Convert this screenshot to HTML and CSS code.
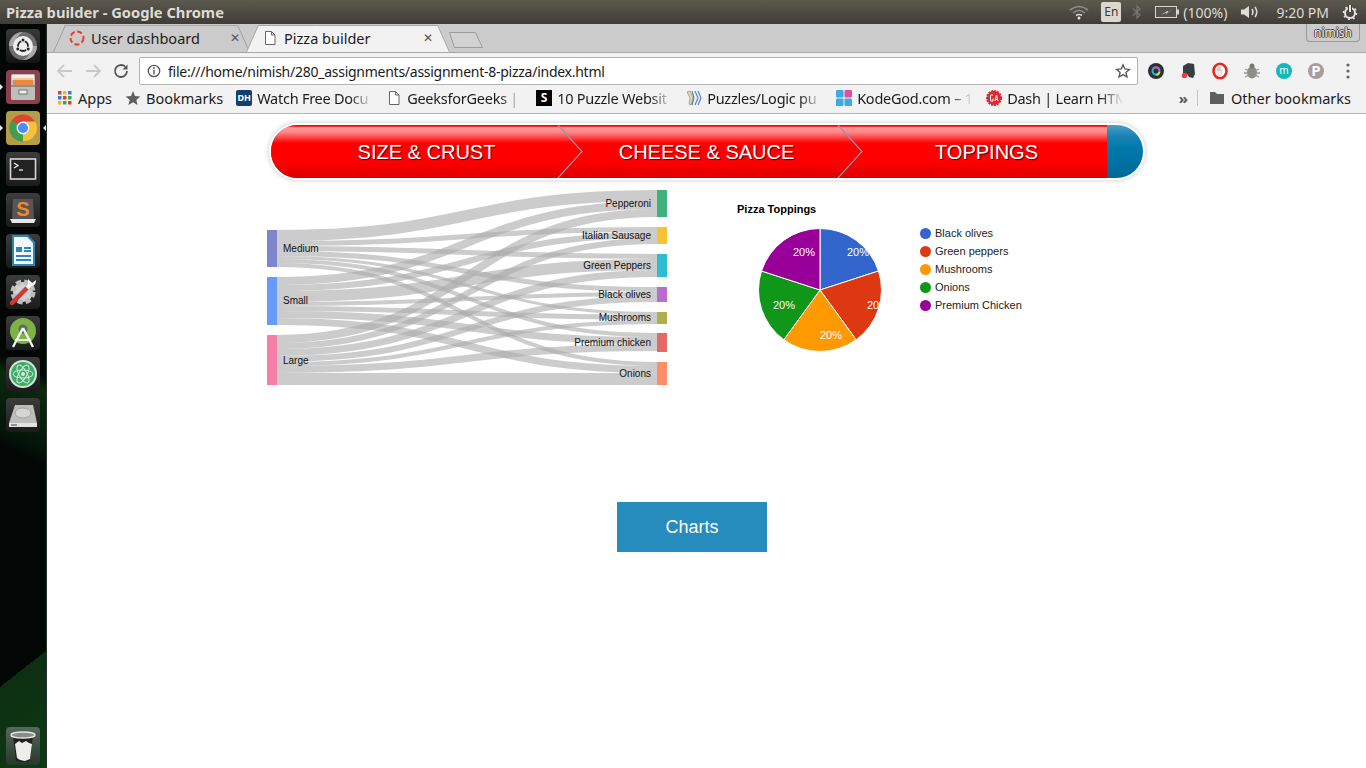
FILE: index.html
```html
<!DOCTYPE html>
<html lang="en">

<head>
    <meta charset="UTF-8">
    <title>Pizza builder</title>
    <link rel="stylesheet" href="styles.css">
</head>

<body>
    <div class="topbar">
        <span class="window-title">Pizza builder - Google Chrome</span>
        <div class="tray">
            <svg class="tray-wifi" width="22" height="16" viewBox="0 0 22 16"><g fill="none" stroke="#8f8d86" stroke-width="1.6"><path d="M2 6Q11-1 20 6"/><path d="M5 9Q11 4 17 9"/></g><path d="M8 11.5Q11 9.5 14 11.5" fill="none" stroke="#d8d6cf" stroke-width="1.6"/><circle cx="11" cy="14" r="1.5" fill="#e6e4de"/></svg>
            <span class="tray-lang">En</span>
            <svg class="tray-bt" width="10" height="16" viewBox="0 0 10 16"><path d="M1 4.5 8 11 5 14V2l3 3-7 6.5" fill="none" stroke="#77756e" stroke-width="1.3"/></svg>
            <svg class="tray-batt" width="24" height="12" viewBox="0 0 24 12"><rect x=".5" y=".5" width="21" height="11" fill="#56544c" stroke="#d8d6cf"/><rect x="22" y="3.5" width="2" height="5" fill="#d8d6cf"/><path d="M6 9 13 4.5 12.5 6.500 18 3 11 8 11.5 6.500z" fill="#d8d6cf"/></svg>
            <span class="tray-text tray-pct">(100%)</span>
            <svg class="tray-vol" width="20" height="16" viewBox="0 0 20 16"><path d="M1 5.500h3L9 2v12L4 10.500H1z" fill="#dedcd5"/><g fill="none" stroke="#dedcd5" stroke-width="1.5"><path d="M12 5q2 3 0 6"/><path d="M15 3q3.500 5 0 10"/></g></svg>
            <span class="tray-text tray-clock">9:20 PM</span>
            <svg class="tray-power" width="16" height="16" viewBox="0 0 16 16"><circle cx="8" cy="9" r="5" fill="none" stroke="#e6e4de" stroke-width="2"/><circle cx="8" cy="9" r="6.5" fill="none" stroke="#e6e4de" stroke-width="1.5" stroke-dasharray="2 3"/><path d="M8 1v7" stroke="#3f3e38" stroke-width="4"/><path d="M8 1v7" stroke="#e6e4de" stroke-width="2"/></svg>
        </div>
    </div>

    <div class="desktop">
        <nav class="launcher">
            <div class="tile tile-ubuntu">
                <svg width="34" height="34" viewBox="0 0 34 34"><circle cx="17" cy="17" r="14" fill="#6d6d6d"/><path d="M3 17A14 14 0 0 1 17 3q-8 4-8 14zM31 17a14 14 0 0 1-14 14q8-4 8-14z" fill="#a8a8a8"/><circle cx="17" cy="17" r="10" fill="#efefef"/><circle cx="17" cy="17" r="5" fill="none" stroke="#222" stroke-width="1.8"/><g fill="#222" stroke="#efefef" stroke-width="1"><circle cx="17" cy="11" r="2"/><circle cx="11.8" cy="20" r="2"/><circle cx="22.2" cy="20" r="2"/></g></svg>
            </div>
            <div class="tile tile-files running">
                <svg width="34" height="34" viewBox="0 0 34 34"><rect x="5" y="4" width="24" height="26" rx="1.5" fill="#bdbdb9"/><rect x="6" y="5" width="22" height="5" fill="#efeeea"/><rect x="7" y="8" width="20" height="7" fill="#e9893f"/><rect x="7" y="8" width="20" height="2" fill="#f6c79a"/><rect x="5" y="15" width="24" height="2" fill="#8f8f8b"/><rect x="13" y="20" width="8" height="4" fill="#efefec" stroke="#77776f"/></svg>
            </div>
            <div class="tile tile-chrome running focused">
                <svg width="34" height="34" viewBox="0 0 34 34"><circle cx="17" cy="17" r="13.5" fill="#db4437"/><path d="M17 17 5.3 23.8A13.5 13.5 0 0 0 23.8 28.7z" fill="#3aa14f"/><path d="M17 10.5H29.3A13.5 13.5 0 0 1 17 30.5z" fill="#f3c13a"/><path d="M17 17 5.3 23.8A13.5 13.5 0 0 1 5.8 9.5z" fill="#3aa14f"/><circle cx="17" cy="17" r="6.5" fill="#f2f2f2"/><circle cx="17" cy="17" r="5" fill="#4f8df0"/></svg>
            </div>
            <div class="tile tile-dark">
                <svg width="34" height="34" viewBox="0 0 34 34"><rect x="4.5" y="7" width="25" height="20" fill="#222" stroke="#d6d6d2" stroke-width="1.6"/><path d="M8 11l4 2.5-4 2.500" fill="none" stroke="#eee" stroke-width="1.3"/><path d="M13 18h4" stroke="#eee" stroke-width="1.3"/></svg>
            </div>
            <div class="tile tile-dark">
                <svg width="34" height="34" viewBox="0 0 34 34"><path d="M7 6h20l1 20H6z" fill="#56565a"/><path d="M4 26h26l-2 4H6z" fill="#e6e6e6"/><text class="sublime-s" x="17" y="23">S</text></svg>
            </div>
            <div class="tile tile-dark">
                <svg width="34" height="34" viewBox="0 0 34 34"><path d="M6 1h16l7 7v24H6z" fill="#2c86b8"/><path d="M8 3h13l6 6v21H8z" fill="#f5f8fa"/><path d="M10 13h6v5h-6z" fill="#2c86b8"/><path d="M18 13h7v2h-7zM18 16h7v2h-7zM10 21h15v2H10zM10 25h15v2H10z" fill="#2c86b8"/></svg>
            </div>
            <div class="tile tile-dark">
                <svg width="34" height="34" viewBox="0 0 34 34"><circle cx="17" cy="17" r="10" fill="#d2d2d2" stroke="#bdbdbd" stroke-width="5" stroke-dasharray="5 3"/><path d="M6 28 21 13" stroke="#cf3a34" stroke-width="4.5" stroke-linecap="round"/><path d="M21 13 26 8" stroke="#f4f4f4" stroke-width="4"/><path d="M22 4 26 8 30 5q0 6-5 6l-3-2z" fill="#f4f4f4"/></svg>
            </div>
            <div class="tile tile-dark">
                <svg width="34" height="34" viewBox="0 0 34 34"><circle cx="17" cy="15" r="13" fill="#7cb342"/><circle cx="17" cy="13" r="4.5" fill="#5e6b62"/><path d="M17 12 7 31M17 12l10 19" fill="none" stroke="#f2f2f2" stroke-width="2.4"/><path d="M9 24h16" stroke="#f2f2f2" stroke-width="1.8"/></svg>
            </div>
            <div class="tile tile-dark">
                <svg width="34" height="34" viewBox="0 0 34 34"><circle cx="17" cy="17" r="14" fill="#cfe8d4"/><circle cx="17" cy="17" r="12" fill="#3fa968"/><g fill="none" stroke="#d5efdc" stroke-width="1"><ellipse cx="17" cy="17" rx="10" ry="4"/><ellipse cx="17" cy="17" rx="10" ry="4" transform="rotate(60 17 17)"/><ellipse cx="17" cy="17" rx="10" ry="4" transform="rotate(120 17 17)"/></g><circle cx="17" cy="17" r="2" fill="#d5efdc"/></svg>
            </div>
            <div class="tile tile-dark">
                <svg width="34" height="34" viewBox="0 0 34 34"><path d="M9 7h18l4 18H3z" fill="#bdbdbb"/><ellipse cx="17" cy="15" rx="8" ry="5" fill="#d5d5d3" stroke="#a2a2a0"/><path d="M3 25h28v4H3z" fill="#e3e3e1"/><path d="M5 27h6" stroke="#444" stroke-width="1"/></svg>
            </div>
            <div class="tile tile-trash">
                <svg width="34" height="38" viewBox="0 0 34 38"><path d="M7 9l3 25q7 2 14 0l3-25z" fill="#222"/><path d="M9 17l4-3 3 2 4-2 3 2 3 1-1 7-1 8-5 2-5-1-3-2-1-7z" fill="#ededE9"/><ellipse cx="17" cy="8" rx="12" ry="3" fill="#8c8c88" stroke="#e4e4e0" stroke-width="1.5"/></svg>
            </div>
        </nav>

        <main class="browser">
            <div class="tabstrip">
                <div class="tab">
                    <svg class="tab-icon" width="16" height="16" viewBox="0 0 16 16"><circle cx="8" cy="8" r="6.5" fill="none" stroke="#e2402e" stroke-width="2" stroke-dasharray="5 2.5"/></svg>
                    <span class="tab-title">User dashboard</span>
                    <span class="tab-close">&#x2715;</span>
                </div>
                <div class="tab tab-active">
                    <svg class="tab-icon" width="16" height="16" viewBox="0 0 16 16"><path d="M3.5 1.5h6l3.5 3.5v9.500H3.500zM9.500 1.500V5H13" fill="#fff" stroke="#666"/></svg>
                    <span class="tab-title">Pizza builder</span>
                    <span class="tab-close">&#x2715;</span>
                </div>
                <svg class="new-tab" width="36" height="18" viewBox="0 0 36 18"><path d="M1.5 1.5h26l7 15h-28z" fill="#d2d2d2" stroke="#9c9c9c"/></svg>
                <div class="profile">nimish</div>
            </div>

            <div class="toolbar">
                <div class="nav-buttons">
                    <svg width="28" height="18" viewBox="0 0 28 18"><path d="M21 9H7M13 3 7 9l6 6" fill="none" stroke="#c9c9c9" stroke-width="1.8"/></svg>
                    <svg width="28" height="18" viewBox="0 0 28 18"><path d="M7 9h14M15 3l6 6-6 6" fill="none" stroke="#c9c9c9" stroke-width="1.8"/></svg>
                    <svg width="28" height="18" viewBox="0 0 28 18"><path d="M20 9a6 6 0 1 1-1.8-4.3" fill="none" stroke="#555" stroke-width="1.8"/><path d="M20.5 2.5v5h-5z" fill="#555"/></svg>
                </div>
                <div class="omnibox">
                    <svg class="omni-info" width="14" height="14" viewBox="0 0 14 14"><circle cx="7" cy="7" r="5.7" fill="none" stroke="#555" stroke-width="1.3"/><path d="M7 6v4.5" stroke="#555" stroke-width="1.4"/><circle cx="7" cy="4" r=".9" fill="#555"/></svg>
                    <span class="omni-url">file:///home/nimish/280_assignments/assignment-8-pizza/index.html</span>
                    <svg class="omni-star" width="16" height="16" viewBox="0 0 16 16"><path d="M8 1.8 9.8 6l4.700.4-3.600 3 1.100 4.600L8 11.600 4 14l1.100-4.600-3.600-3L6.200 6z" fill="none" stroke="#555" stroke-width="1.3"/></svg>
                </div>
                <div class="extensions">
                    <svg width="32" height="18" viewBox="0 0 32 18"><circle cx="16" cy="9" r="8" fill="#2b2f36"/><circle cx="16" cy="9" r="3.5" fill="none" stroke="#25b8d8" stroke-width="2"/><path d="M13 6.500a4 4 0 0 1 6 0" fill="none" stroke="#e84a8a" stroke-width="2"/><path d="M19.500 10a4 4 0 0 1-3 3" fill="none" stroke="#e8d23a" stroke-width="2"/></svg>
                    <svg width="32" height="18" viewBox="0 0 32 18"><path d="M11 4l5-3 6 1 1 10-2 4-4-1-2-3-4-1z" fill="#3a3d40"/><circle cx="12.5" cy="13.5" r="2.8" fill="#e8413c"/></svg>
                    <svg width="32" height="18" viewBox="0 0 32 18"><ellipse cx="16" cy="9" rx="6.5" ry="7.2" fill="#fff" stroke="#e02a20" stroke-width="2.6"/><path d="M13 10.500V6.500h.8V9V4.800h1V9V4.500h1V9V4.800h1V9l.8-1.500h.7l-.4 3.500-1.300 2.500H14.500z" fill="#efe7e4" stroke="#c9bdb9" stroke-width=".4"/></svg>
                    <svg width="32" height="18" viewBox="0 0 32 18"><ellipse cx="16" cy="10.500" rx="5" ry="6" fill="#8d8d88"/><circle cx="16" cy="4" r="2.5" fill="#77776f"/><path d="M9 7l4 2M23 7l-4 2M8 11h4M24 11h-4M9 15l4-2M23 15l-4-2" stroke="#9a9a94" stroke-width="1.3"/></svg>
                    <svg width="32" height="18" viewBox="0 0 32 18"><circle cx="16" cy="9" r="8" fill="#11b8bd"/><text class="ext-m" x="16" y="12">m</text></svg>
                    <svg width="32" height="18" viewBox="0 0 32 18"><circle cx="16" cy="9" r="8" fill="#a89c9c"/><text class="ext-p" x="16" y="14">P</text></svg>
                    <svg width="32" height="18" viewBox="0 0 32 18"><circle cx="16" cy="3" r="1.6" fill="#666"/><circle cx="16" cy="9" r="1.6" fill="#666"/><circle cx="16" cy="15" r="1.6" fill="#666"/></svg>
                </div>
            </div>

            <div class="bookmarks">
                <div class="bm">
                    <svg width="14" height="14" viewBox="0 0 14 14"><path d="M0 0h3.500v3.500H0z" fill="#e2402e"/><path d="M5 0h3.500v3.500H5z" fill="#f2b632"/><path d="M10 0h3.500v3.500H10z" fill="#3b78e7"/><path d="M0 5h3.500v3.500H0z" fill="#3b78e7"/><path d="M5 5h3.500v3.500H5z" fill="#e2402e"/><path d="M10 5h3.500v3.500H10z" fill="#34a853"/><path d="M0 10h3.500v3.500H0z" fill="#f2b632"/><path d="M5 10h3.500v3.500H5z" fill="#34a853"/><path d="M10 10h3.500v3.500H10z" fill="#e2402e"/></svg>
                    <span>Apps</span>
                </div>
                <div class="bm">
                    <svg width="16" height="16" viewBox="0 0 16 16"><path d="M8 1 10 6l5.300.4-4 3.500 1.300 5.100L8 12.200 3.400 15l1.300-5.100-4-3.500L6 6z" fill="#5f5f5f"/></svg>
                    <span>Bookmarks</span>
                </div>
                <div class="bm bm-fixed">
                    <span class="favicon fav-dh">DH</span>
                    <span class="bm-label">Watch Free Docu</span>
                </div>
                <div class="bm bm-fixed">
                    <svg width="16" height="16" viewBox="0 0 16 16"><path d="M3.500 1.500h6l3.500 3.500v9.500H3.500zM9.500 1.500V5H13" fill="#fff" stroke="#666"/></svg>
                    <span class="bm-label">GeeksforGeeks | A</span>
                </div>
                <div class="bm bm-fixed">
                    <span class="favicon fav-s">S</span>
                    <span class="bm-label">10 Puzzle Websit</span>
                </div>
                <div class="bm bm-fixed">
                    <svg width="16" height="16" viewBox="0 0 16 16"><path d="M1 2l3-1 3 7-2 7-2-1 1-6z" fill="#ead9a8" stroke="#666" stroke-width=".5"/><path d="M6 1l2 7-2 7M9 1l3 7-3 7M12 1l3 7-3 7" fill="none" stroke="#4a7fc0" stroke-width="1.1"/></svg>
                    <span class="bm-label">Puzzles/Logic pu</span>
                </div>
                <div class="bm bm-fixed">
                    <svg width="16" height="16" viewBox="0 0 16 16"><rect width="7.5" height="7.5" rx="1" fill="#3fa9e0"/><rect x="8.5" width="7.5" height="7.5" rx="1" fill="#e04fa0"/><rect y="8.5" width="7.5" height="7.5" rx="1" fill="#3fa9e0"/><rect x="8.5" y="8.5" width="7.5" height="7.5" rx="1" fill="#3fa9e0"/></svg>
                    <span class="bm-label">KodeGod.com &#8211; 1</span>
                </div>
                <div class="bm bm-fixed">
                    <svg width="16" height="16" viewBox="0 0 16 16"><circle cx="8" cy="8" r="7" fill="#e0282e" stroke="#e0282e" stroke-width="2" stroke-dasharray="2 1"/><path d="M7 5H4.500v6H7V8.500M9 11l1.500-6 1.500 6M9.500 9.500h2" fill="none" stroke="#fff" stroke-width="1"/></svg>
                    <span class="bm-label">Dash | Learn HTM</span>
                </div>
                <div class="bm-end">
                    <span class="bm-more">&raquo;</span>
                    <span class="bm-sep"></span>
                    <svg width="16" height="14" viewBox="0 0 16 14"><path d="M1 1h5l2 2h7v10H1z" fill="#5f5f5f"/></svg>
                    <span>Other bookmarks</span>
                </div>
            </div>

            <div class="page">
                <div class="steps">
                    <div class="step step-one">
                        SIZE &amp; CRUST
                        <svg class="chevron" width="27" height="53" viewBox="0 0 27 53"><path d="M1 0 25 26.500 1 53" fill="none" stroke="#8a97ad" stroke-width="1.2"/></svg>
                    </div>
                    <div class="step step-two">
                        CHEESE &amp; SAUCE
                        <svg class="chevron" width="27" height="53" viewBox="0 0 27 53"><path d="M1 0 25 26.500 1 53" fill="none" stroke="#8a97ad" stroke-width="1.2"/></svg>
                    </div>
                    <div class="step step-three">TOPPINGS</div>
                </div>

                <div class="charts">
                    <svg class="sankey" width="400" height="195" viewBox="267 190 400 195">
                        <g class="links">
                            <path stroke-width="11" d="M277 235.500C467 235.500 467 195.500 657 195.500"/>
                            <path stroke-width="5" d="M277 243.500C467 243.500 467 229.500 657 229.500"/>
                            <path stroke-width="5" d="M277 248.500C467 248.500 467 256.500 657 256.500"/>
                            <path stroke-width="5" d="M277 253.500C467 253.500 467 289.500 657 289.500"/>
                            <path stroke-width="3" d="M277 257.500C467 257.500 467 313.500 657 313.500"/>
                            <path stroke-width="4" d="M277 261C467 261 467 335 657 335"/>
                            <path stroke-width="4" d="M277 265C467 265 467 364 657 364"/>
                            <path stroke-width="8" d="M277 281C467 281 467 205 657 205"/>
                            <path stroke-width="6" d="M277 288C467 288 467 235 657 235"/>
                            <path stroke-width="11" d="M277 296.500C467 296.500 467 264.500 657 264.500"/>
                            <path stroke-width="4" d="M277 304C467 304 467 294 657 294"/>
                            <path stroke-width="5" d="M277 308.500C467 308.500 467 317.500 657 317.500"/>
                            <path stroke-width="7" d="M277 314.500C467 314.500 467 340.500 657 340.500"/>
                            <path stroke-width="7" d="M277 321.500C467 321.500 467 369.500 657 369.500"/>
                            <path stroke-width="8" d="M277 339C467 339 467 213 657 213"/>
                            <path stroke-width="6" d="M277 346C467 346 467 241 657 241"/>
                            <path stroke-width="7" d="M277 352.500C467 352.500 467 273.500 657 273.500"/>
                            <path stroke-width="6" d="M277 359C467 359 467 299 657 299"/>
                            <path stroke-width="4" d="M277 364C467 364 467 322 657 322"/>
                            <path stroke-width="7" d="M277 369.500C467 369.500 467 347.500 657 347.500"/>
                            <path stroke-width="12" d="M277 379C467 379 467 379 657 379"/>
                        </g>
                        <rect x="267" y="230" width="10" height="37" fill="#7f86cc"/>
                        <rect x="267" y="277" width="10" height="48" fill="#659cfa"/>
                        <rect x="267" y="335" width="10" height="50" fill="#f57fa8"/>
                        <rect x="657" y="190" width="10" height="27" fill="#3fb17c"/>
                        <rect x="657" y="227" width="10" height="17" fill="#f6c333"/>
                        <rect x="657" y="254" width="10" height="23" fill="#30bcd0"/>
                        <rect x="657" y="287" width="10" height="15" fill="#b96ccc"/>
                        <rect x="657" y="312" width="10" height="12" fill="#aeb04c"/>
                        <rect x="657" y="333" width="10" height="19" fill="#e36a64"/>
                        <rect x="657" y="362" width="10" height="23" fill="#ff8d66"/>
                        <text class="chart-text" x="283" y="252">Medium</text>
                        <text class="chart-text" x="283" y="304">Small</text>
                        <text class="chart-text" x="283" y="364">Large</text>
                        <text class="chart-text end" x="651" y="207">Pepperoni</text>
                        <text class="chart-text end" x="651" y="239">Italian Sausage</text>
                        <text class="chart-text end" x="651" y="269">Green Peppers</text>
                        <text class="chart-text end" x="651" y="298">Black olives</text>
                        <text class="chart-text end" x="651" y="321">Mushrooms</text>
                        <text class="chart-text end" x="651" y="346">Premium chicken</text>
                        <text class="chart-text end" x="651" y="377">Onions</text>
                    </svg>

                    <svg class="pie" width="300" height="195" viewBox="730 190 300 195">
                        <defs>
                            <clipPath id="pieClip"><circle cx="820" cy="290" r="61.5"/></clipPath>
                        </defs>
                        <text class="pie-title" x="737" y="213">Pizza Toppings</text>
                        <g class="slices">
                            <path fill="#3366cc" d="M820 290V228.500A61.500 61.500 0 0 1 878.500 271z"/>
                            <path fill="#dc3912" d="M820 290 878.500 271A61.500 61.500 0 0 1 856.150 339.750z"/>
                            <path fill="#ff9900" d="M820 290 856.150 339.750A61.500 61.500 0 0 1 783.850 339.750z"/>
                            <path fill="#109618" d="M820 290 783.850 339.750A61.500 61.500 0 0 1 761.500 271z"/>
                            <path fill="#990099" d="M820 290 761.500 271A61.500 61.500 0 0 1 820 228.500z"/>
                        </g>
                        <g class="pie-labels" clip-path="url(#pieClip)">
                            <text x="847" y="256">20%</text>
                            <text x="867" y="309">20%</text>
                            <text x="820" y="339">20%</text>
                            <text x="773" y="309">20%</text>
                            <text x="793" y="256">20%</text>
                        </g>
                        <circle cx="925.5" cy="233.5" r="5.5" fill="#3366cc"/>
                        <circle cx="925.5" cy="251.5" r="5.5" fill="#dc3912"/>
                        <circle cx="925.5" cy="269.5" r="5.5" fill="#ff9900"/>
                        <circle cx="925.5" cy="287.5" r="5.5" fill="#109618"/>
                        <circle cx="925.5" cy="305.5" r="5.5" fill="#990099"/>
                        <text class="legend" x="935" y="237">Black olives</text>
                        <text class="legend" x="935" y="255">Green peppers</text>
                        <text class="legend" x="935" y="273">Mushrooms</text>
                        <text class="legend" x="935" y="291">Onions</text>
                        <text class="legend" x="935" y="309">Premium Chicken</text>
                    </svg>
                </div>

                <button class="charts-btn">Charts</button>
            </div>
        </main>
    </div>
</body>
</html>
```

FILE: styles.css
```css
html, body {
    margin: 0;
    padding: 0;
    height: 100%;
    overflow: hidden;
}

body {
    display: flex;
    flex-direction: column;
    font-family: "Noto Sans", sans-serif;
    background-color: white;
}

/* ubuntu panel */
.topbar {
    height: 24px;
    flex: none;
    display: flex;
    align-items: center;
    background: linear-gradient(#5c594f, #3e3d37);
    color: #dfdbd2;
}

.window-title {
    margin-left: 6px;
    font-size: 14.7px;
    font-weight: bold;
}

.tray {
    margin-left: auto;
    display: flex;
    align-items: center;
    height: 24px;
}

.tray-wifi {
    margin-right: 11px;
}

.tray-lang {
    width: 20px;
    height: 20px;
    margin-right: 11px;
    border-radius: 2px;
    background-color: #dcd8d0;
    color: #3c3b37;
    font-size: 12px;
    line-height: 20px;
    text-align: center;
}

.tray-bt {
    margin-right: 13px;
}

.tray-batt {
    margin-right: 4px;
}

.tray-text {
    font-size: 14px;
    color: #dfdbd2;
}

.tray-pct {
    margin-right: 13px;
}

.tray-vol {
    margin-right: 16px;
}

.tray-clock {
    margin-right: 13px;
}

.tray-power {
    margin-right: 8px;
}

.desktop {
    flex: 1;
    display: flex;
    min-height: 0;
}

/* launcher */
.launcher {
    width: 47px;
    flex: none;
    box-sizing: border-box;
    padding: 5px 0 3px 6px;
    display: flex;
    flex-direction: column;
    gap: 7px;
    border-right: 1px solid #26302a;
    background:
        linear-gradient(322deg, #0f3a16 0, #0c2e12 15%, transparent 15%),
        linear-gradient(205deg, transparent 46%, #0a2a0f 48%, #04140a 56%, transparent 58%),
        #020604;
}

.tile {
    position: relative;
    width: 34px;
    height: 34px;
    border-radius: 4px;
}

.running::before,
.focused::after {
    content: "";
    position: absolute;
    top: 14px;
    border: 3px solid transparent;
}

.running::before {
    left: -6px;
    border-left-color: #e8e8e8;
}

.focused::after {
    right: -6px;
    border-right-color: #e8e8e8;
}

.tile-dark {
    background: linear-gradient(#3c3c3c, #1b1b1b);
}

.tile-ubuntu {
    background: linear-gradient(#3a3a3a, #141414);
}

.tile-files {
    background-color: #8c3f4f;
}

.tile-chrome {
    background-color: #b59c48;
}

.tile-trash {
    height: 38px;
    margin-top: auto;
    background: linear-gradient(#56685a, #26382a);
}

/* chrome window */
.browser {
    flex: 1;
    min-width: 0;
    display: flex;
    flex-direction: column;
}

.tabstrip {
    height: 28px;
    flex: none;
    position: relative;
    display: flex;
    padding-left: 6px;
    background-color: #cbcbcb;
}

.tab {
    position: relative;
    z-index: 0;
    width: 197px;
    height: 28px;
    flex: none;
    display: flex;
    align-items: center;
    padding-left: 16px;
    box-sizing: border-box;
    font-size: 14.5px;
    color: #1c1c1c;
}

.tab::before,
.tab::after {
    content: "";
    position: absolute;
    z-index: -1;
    top: 1px;
    bottom: 0;
    width: 60%;
    box-sizing: border-box;
    background-color: #cbcbcb;
    border-top: 1px solid #a8a8a8;
}

.tab::before {
    left: 0;
    border-left: 1px solid #a0a0a0;
    transform-origin: bottom left;
    transform: skewX(-24deg);
}

.tab::after {
    right: 0;
    border-right: 1px solid #a0a0a0;
    transform-origin: bottom right;
    transform: skewX(24deg);
}

.tab-active {
    z-index: 1;
    width: 204px;
    margin-left: -4px;
    padding-left: 16px;
}

.tab-active::before,
.tab-active::after {
    background-color: #f2f2f2;
}

.tab-icon {
    margin-right: 6px;
    flex: none;
}

.tab-close {
    position: absolute;
    top: 5px;
    right: 10px;
    font-size: 12px;
    color: #555;
}

.tab-active .tab-close {
    right: 17px;
}

.new-tab {
    margin: 7px 0 0 -2px;
}

.profile {
    position: absolute;
    top: 0;
    right: 6px;
    width: 54px;
    height: 18px;
    box-sizing: border-box;
    border: 1px solid #9a9a9a;
    border-top: none;
    border-radius: 0 0 4px 4px;
    font-size: 12px;
    line-height: 17px;
    text-align: center;
    color: #f4f4f4;
    text-shadow: 1px 0 #444, -1px 0 #444, 0 1px #444, 0 -1px #444;
}

.toolbar {
    height: 33px;
    flex: none;
    box-sizing: border-box;
    display: flex;
    align-items: center;
    padding: 4px 2px 0 4px;
    border-top: 1px solid #a8a8a8;
    background-color: #f2f2f2;
}

.nav-buttons {
    display: flex;
    margin-right: 4px;
}

.omnibox {
    flex: 1;
    height: 28px;
    box-sizing: border-box;
    display: flex;
    align-items: center;
    padding: 0 6px 0 7px;
    margin-right: 2px;
    background-color: white;
    border: 1px solid #b2b2b2;
    border-radius: 2px;
}

.omni-url {
    margin-left: 7px;
    font-size: 14px;
    letter-spacing: -0.26px;
    color: #1a1a1a;
}

.omni-star {
    margin-left: auto;
}

.extensions {
    display: flex;
    width: 224px;
}

.ext-m {
    font-family: "Noto Sans", sans-serif;
    font-size: 10px;
    fill: white;
    text-anchor: middle;
}

.ext-p {
    font-family: "Noto Sans", sans-serif;
    font-size: 15px;
    font-weight: bold;
    fill: white;
    text-anchor: middle;
}

.sublime-s {
    font-family: "Liberation Sans", sans-serif;
    font-size: 20px;
    font-weight: bold;
    fill: #f08a24;
    text-anchor: middle;
}

.bookmarks {
    height: 29px;
    flex: none;
    box-sizing: border-box;
    display: flex;
    align-items: center;
    gap: 13px;
    padding: 0 15px 2px 11px;
    border-bottom: 1px solid #b5b5b5;
    background-color: #f2f2f2;
    font-size: 14.5px;
    color: #1c1c1c;
}

.bm {
    display: flex;
    align-items: center;
    gap: 5px;
    flex: none;
    white-space: nowrap;
}

.bm:first-child {
    gap: 6px;
}

.bm-fixed {
    width: 137px;
}

.bm-label {
    width: 116px;
    letter-spacing: -0.25px;
    -webkit-mask-image: linear-gradient(to right, black 80%, transparent);
    mask-image: linear-gradient(to right, black 80%, transparent);
}

.favicon {
    width: 16px;
    height: 16px;
    flex: none;
    text-align: center;
}

.fav-dh {
    border-radius: 2px;
    background-color: #123f6e;
    color: white;
    font-size: 9px;
    font-weight: bold;
    line-height: 16px;
}

.fav-s {
    background-color: black;
    color: white;
    font-size: 12px;
    font-weight: bold;
    line-height: 16px;
}

.bm-end {
    margin-left: auto;
    display: flex;
    align-items: center;
    gap: 6px;
    white-space: nowrap;
}

.bm-more {
    margin-right: 3px;
    color: #555;
    font-size: 15px;
    font-weight: bold;
}

.bm-sep {
    width: 1px;
    height: 16px;
    margin-right: 5px;
    background-color: #c4c4c4;
}

/* page */
.page {
    flex: 1;
    display: flex;
    flex-direction: column;
    font-family: "Liberation Sans", Arial, sans-serif;
    background-color: white;
}

.steps {
    align-self: center;
    width: 872px;
    height: 53px;
    margin-top: 11px;
    display: flex;
    overflow: hidden;
    border-radius: 27px;
    background: linear-gradient(#4d9ec5 0, #1682b4 22%, #0078aa 45%, #006a98 100%);
    box-shadow: 0 0 0 2px white, 0 0 4px 3px rgba(0, 0, 0, 0.16);
}

.step {
    position: relative;
    height: 53px;
    flex: none;
    box-sizing: border-box;
    text-align: center;
    font-size: 20px;
    line-height: 55px;
    color: white;
    text-shadow: 1px 1px 1px #5a0000;
    background: linear-gradient(#f00 0, #f00 2%, #ff9a9a 5%, #ff8484 14%, #f00 34%, #f00 70%, #dc0000 100%);
}

.step-one {
    width: 288px;
    padding-left: 24px;
}

.step-two {
    width: 280px;
    padding-left: 16px;
}

.step-three {
    width: 268px;
    padding-left: 28px;
}

.chevron {
    position: absolute;
    z-index: 1;
    top: 0;
    right: -25px;
}

.charts {
    display: flex;
    margin-top: 12px;
    padding-left: 220px;
}

.sankey {
    flex: none;
}

.pie {
    flex: none;
    margin-left: 63px;
}

.links path {
    fill: none;
    stroke: #aaa;
    stroke-opacity: 0.6;
}

.chart-text {
    font-size: 10px;
    fill: #111;
}

.chart-text.end {
    text-anchor: end;
}

.pie-title {
    font-size: 11px;
    font-weight: bold;
    fill: black;
}

.slices path {
    stroke: white;
    stroke-width: 1;
}

.pie-labels text {
    font-size: 11px;
    fill: white;
}

.legend {
    font-size: 11px;
    fill: #222;
}

.charts-btn {
    align-self: flex-start;
    width: 150px;
    height: 50px;
    margin: 117px 0 0 570px;
    padding: 1px 0 0;
    border: none;
    background-color: #268bbd;
    color: white;
    font-family: "Liberation Sans", Arial, sans-serif;
    font-size: 18px;
}
```
